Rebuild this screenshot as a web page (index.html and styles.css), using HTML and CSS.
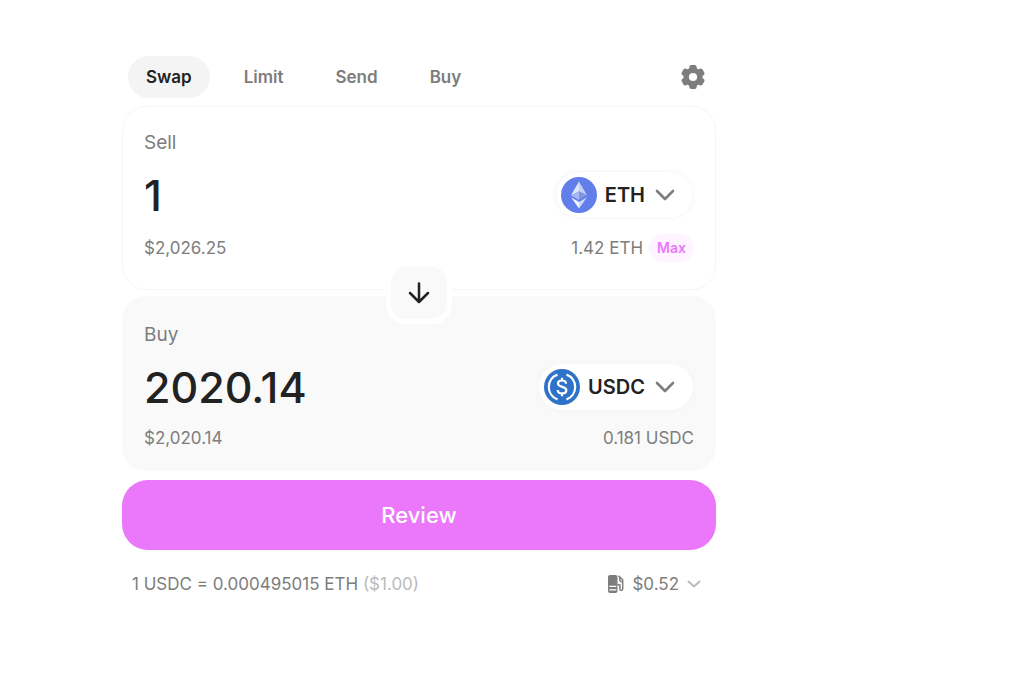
FILE: index.html
```html
<!DOCTYPE html>
<html lang="en">
<head>
  <meta charset="UTF-8">
  <meta name="viewport" content="width=device-width, initial-scale=1">
  <title>Swap</title>
  <link rel="stylesheet" href="styles.css">
</head>

<body>
<main class="swap">
  <header class="swap-header">
    <nav class="tabs">
      <button class="tab active" type="button">Swap</button>
      <button class="tab" type="button">Limit</button>
      <button class="tab" type="button">Send</button>
      <button class="tab" type="button">Buy</button>
    </nav>
    <button class="settings" type="button" aria-label="Settings">
      <svg width="26" height="26" viewBox="0 0 26 26">
        <g fill="#7d7d7d">
          <circle cx="13" cy="13" r="9.6"/>
          <rect x="9.3" y="1" width="7.4" height="24" rx="2"/>
          <rect x="9.3" y="1" width="7.4" height="24" rx="2" transform="rotate(60 13 13)"/>
          <rect x="9.3" y="1" width="7.4" height="24" rx="2" transform="rotate(120 13 13)"/>
        </g>
        <circle cx="13" cy="13" r="4.1" fill="#fff"/>
      </svg>
    </button>
  </header>

  <section class="panel panel-sell">
    <label class="panel-label" for="sell">Sell</label>
    <div class="row">
      <input class="amount" id="sell" type="text" inputmode="decimal" value="1">
      <button class="token" type="button">
        <svg class="token-logo" width="36" height="36" viewBox="0 0 36 36">
          <circle cx="18" cy="18" r="18" fill="#627eea"/>
          <path fill="#dfe5fb" d="M18 4.5l-8 13.7 8-3.6z"/>
          <path fill="#c3cdf7" d="M18 4.5l8 13.7-8-3.6z"/>
          <path fill="#a9b7f3" d="M10 18.2l8-3.6v8.3z"/>
          <path fill="#8195e3" d="M18 14.6l8 3.6-8 4.7z"/>
          <path fill="#f3f5fe" d="M10 20.2l8 4.7v6.6z"/>
          <path fill="#d0d8f9" d="M26 20.2l-8 4.7v6.6z"/>
        </svg>
        <span>ETH</span>
        <svg class="chevron" width="20" height="12" viewBox="0 0 20 12"><path d="M2 2l8 8 8-8"/></svg>
      </button>
    </div>
    <div class="row details">
      <span>$2,026.25</span>
      <span class="balance">1.42 ETH <button class="max" type="button">Max</button></span>
    </div>
  </section>

  <div class="switch">
    <button class="switch-button" type="button" aria-label="Switch tokens">
      <svg width="24" height="24" viewBox="0 0 24 24"><path d="M12 2.5v18M3 12l9 9 9-9"/></svg>
    </button>
  </div>

  <section class="panel panel-buy">
    <label class="panel-label" for="buy">Buy</label>
    <div class="row">
      <input class="amount" id="buy" type="text" inputmode="decimal" value="2020.14">
      <button class="token" type="button">
        <svg class="token-logo" width="36" height="36" viewBox="0 0 36 36">
          <circle cx="18" cy="18" r="18" fill="#2f72c9"/>
          <g fill="none" stroke="#fff" stroke-width="2.2">
            <path d="M13.5 5.6a13.2 13.2 0 0 0 0 24.8M22.5 5.600a13.200 13.200 0 0 1 0 24.800"/>
            <path d="M22 14.8c0-2.200-1.600-3.300-4-3.300s-4 1.100-4 3.100c0 4.400 8.300 2.200 8.300 6.600 0 2.100-1.700 3.200-4.300 3.200s-4.300-1.200-4.300-3.400M18 8.800v2.700M18 24.500v2.700"/>
          </g>
        </svg>
        <span>USDC</span>
        <svg class="chevron" width="20" height="12" viewBox="0 0 20 12"><path d="M2 2l8 8 8-8"/></svg>
      </button>
    </div>
    <div class="row details">
      <span>$2,020.14</span>
      <span>0.181 USDC</span>
    </div>
  </section>

  <button class="review" type="button">Review</button>

  <footer class="rate">
    <span>1 USDC = 0.000495015 ETH <span class="muted">($1.00)</span></span>
    <button class="gas" type="button">
      <svg width="16" height="18" viewBox="0 0 16 18">
        <path fill="#7d7d7d" fill-rule="evenodd" d="M2 0h5.500a2 2 0 0 1 2 2v14a2 2 0 0 1-2 2H2a2 2 0 0 1-2-2V2a2 2 0 0 1 2-2zM1.300 10.800V12h7v-1.200zM1.300 14.300v1.200h7v-1.200z"/>
        <path fill="none" stroke="#7d7d7d" stroke-width="1.5" stroke-linejoin="round" d="M10.500.8l4.200 4v9.200a1.400 1.400 0 0 1-2.800 0V9.800H9.500M11.800 2v3.500l2.900 2"/>
      </svg>
      <span>$0.52</span>
      <svg class="chevron-small" width="14" height="8" viewBox="0 0 14 8"><path d="M1.500 1.500L7 6.500l5.500-5"/></svg>
    </button>
  </footer>
</main>
</body>
</html>
```
FILE: styles.css
```css
* { box-sizing: border-box; }
body { margin: 0; background: #fff; color: #222; font-family: Inter, "Liberation Sans", sans-serif; }
button, input { font: inherit; color: inherit; border: none; background: none; padding: 0; margin: 0; }
button { cursor: pointer; }
svg { display: block; flex: none; }

.swap { max-width: 594px; margin: 56px 16px 0 122px; }

.swap-header { display: flex; justify-content: space-between; align-items: center; padding: 0 10px 0 6px; margin-bottom: 8px; }
.tabs { display: flex; gap: 16px; }
.tab { height: 42px; padding: 0 18px; border-radius: 21px; font-size: 17px; font-weight: 600; color: #7d7d7d; }
.tab.active { background: #f4f4f4; color: #222; }

.panel { border: 1px solid #f9f9f9; border-radius: 24px; }
.panel-sell { padding: 24px 21px 27px; border-color: #f6f6f6; }
.panel-buy { padding: 26px 21px 20px; background: #f9f9f9; }
.panel-label { display: block; font-size: 19px; line-height: 24px; color: #7d7d7d; }
.row { display: flex; justify-content: space-between; align-items: center; margin-top: 12px; }
.amount { flex: 1; min-width: 0; height: 56px; font-size: 43px; font-weight: 500; outline: none; }
.details { margin-top: 11px; color: #7d7d7d; font-size: 17px; line-height: 24px; }

.token { display: flex; align-items: center; height: 48px; padding: 0 18px 0 5px; border: 1px solid #f7f7f7; border-radius: 24px; background: #fff; box-shadow: 0 0 8px rgba(0, 0, 0, 0.02); font-size: 20px; font-weight: 600; }
.token-logo { margin-right: 8px; }
.chevron { margin-left: 10px; }
.chevron path { fill: none; stroke: #7d7d7d; stroke-width: 2.6; stroke-linecap: round; stroke-linejoin: round; }

.balance { display: flex; align-items: center; gap: 6px; }
.max { height: 28px; padding: 0 8px; border-radius: 14px; background: #fef4ff; color: #eb78fa; font-size: 14px; font-weight: 600; }

/* sits over the seam between the two panels */
.switch { position: relative; height: 6px; }
.switch-button { position: absolute; top: 50%; left: 50%; transform: translate(-50%, -50%); display: flex; align-items: center; justify-content: center; width: 66px; height: 62px; border: 5px solid #fff; border-radius: 20px; background: #f9f9f9; }
.switch-button path { fill: none; stroke: #222; stroke-width: 2.5; stroke-linecap: round; stroke-linejoin: round; }

.review { display: block; width: 100%; height: 70px; margin-top: 9px; border-radius: 26px; background: #eb78fa; color: #fff; font-size: 22px; font-weight: 500; }

.rate { display: flex; justify-content: space-between; align-items: center; padding: 0 15px 0 10px; margin-top: 22px; font-size: 17px; line-height: 24px; color: #7d7d7d; }
.muted { color: #bbb; }
.gas { display: flex; align-items: center; gap: 8px; }
.chevron-small path { fill: none; stroke: #bbb; stroke-width: 2; stroke-linecap: round; stroke-linejoin: round; }
```
